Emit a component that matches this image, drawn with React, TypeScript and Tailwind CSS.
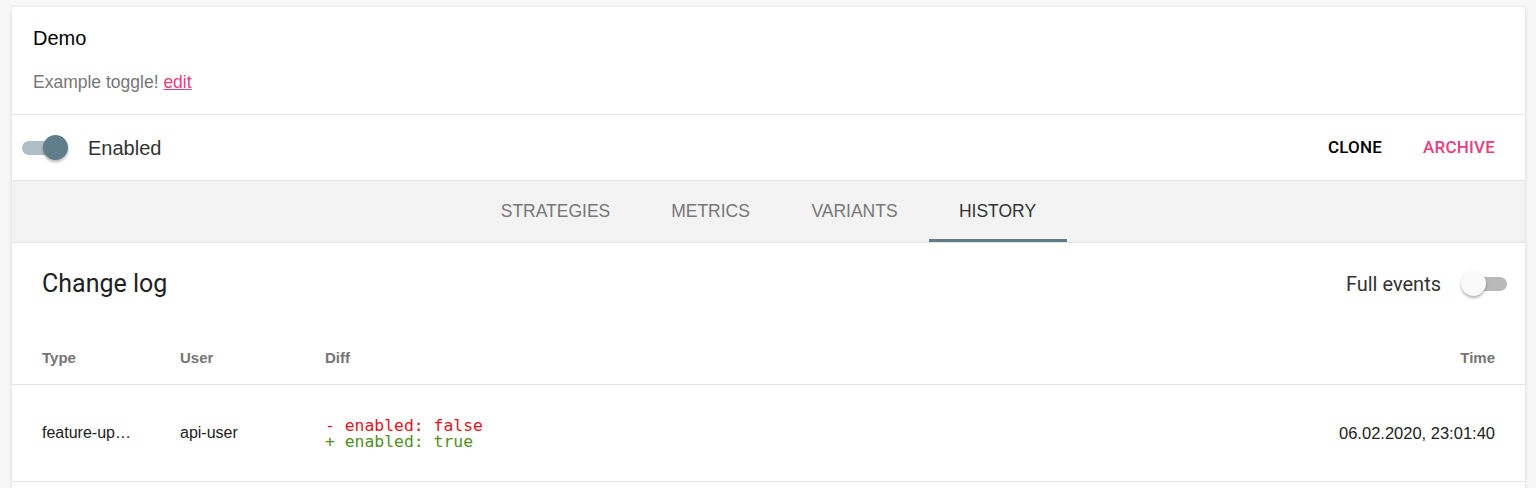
import React, { useState } from 'react';

type ToggleProps = {
    on: boolean;
    onChange: () => void;
};

function Toggle({ on, onChange }: ToggleProps) {
    return (
        <button type="button" onClick={onChange} className="relative w-[46px] h-[26px] shrink-0 cursor-pointer">
            <span
                className={
                    on
                        ? 'absolute left-0 top-[6px] w-[40px] h-[14px] rounded-full bg-[#afbdc5]'
                        : 'absolute right-0 top-[6px] w-[40px] h-[14px] rounded-full bg-[#b9b9b9]'
                }
            />
            <span
                className={
                    on
                        ? 'absolute right-0 top-0 w-[25px] h-[25px] rounded-full bg-[#607d8b] shadow-[0_2px_3px_rgba(0,0,0,0.3)]'
                        : 'absolute left-0 top-0 w-[25px] h-[25px] rounded-full bg-[#fafafa] shadow-[0_2px_3px_rgba(0,0,0,0.3)]'
                }
            />
        </button>
    );
}

const tabs = [
    { label: 'STRATEGIES', w: 'w-[170px]' },
    { label: 'METRICS', w: 'w-[140px]' },
    { label: 'VARIANTS', w: 'w-[148px]' },
    { label: 'HISTORY', w: 'w-[138px]' },
];

function App() {
    const [enabled, setEnabled] = useState(true);
    const [fullEvents, setFullEvents] = useState(false);
    const [active, setActive] = useState('HISTORY');

    return (
        <div className="min-h-screen bg-[#f7f7f7] pt-[7px] pl-[12px] pr-[11px] font-['Liberation_Sans',Arial,sans-serif]">
            <div className="bg-white rounded-[3px] shadow-[0_1px_4px_rgba(0,0,0,0.14)]">

                {/* header */}
                <div className="h-[108px] px-[21px] pt-[19px] border-b border-[#e6e6e6]">
                    <p className="text-[20px] leading-[24px] text-black">Demo</p>
                    <p className="mt-[22px] text-[17.5px] leading-[20px] text-[#777]">
                        Example toggle!{' '}
                        <a href="#" className="text-[#e5407f] underline">edit</a>
                    </p>
                </div>

                {/* toggle + actions */}
                <div className="h-[66px] flex items-center justify-between pl-[10px] pr-[30px] border-b border-[#e6e6e6]">
                    <div className="flex items-center gap-[20px]">
                        <Toggle on={enabled} onChange={() => setEnabled(!enabled)} />
                        <span className="text-[20px] text-[#333]">Enabled</span>
                    </div>
                    <div className="flex items-center gap-[41px] font-['Roboto',sans-serif] font-medium text-[17px] tracking-[0.2px]">
                        <button type="button" className="text-black">CLONE</button>
                        <button type="button" className="text-[#e5407f]">ARCHIVE</button>
                    </div>
                </div>

                {/* tabs */}
                <div className="h-[62px] flex justify-center bg-[#f3f3f3] border-b border-[#e2e2e2]">
                    {tabs.map(tab => (
                        <button
                            key={tab.label}
                            type="button"
                            onClick={() => setActive(tab.label)}
                            className={
                                active === tab.label
                                    ? `${tab.w} h-full text-[17.5px] text-[#333] border-b-[3px] border-[#607d8b] pt-[3px]`
                                    : `${tab.w} h-full text-[17.5px] text-[#777] border-b-[3px] border-transparent pt-[3px]`
                            }
                        >
                            {tab.label}
                        </button>
                    ))}
                </div>

                {/* change log */}
                <div className="h-[82px] flex items-center justify-between pl-[30px] pr-[18px] font-['Roboto',sans-serif]">
                    <h2 className="text-[25px] text-[#222]">Change log</h2>
                    <div className="flex items-center gap-[20px]">
                        <span className="text-[20px] text-[#333]">Full events</span>
                        <Toggle on={fullEvents} onChange={() => setFullEvents(!fullEvents)} />
                    </div>
                </div>

                <div className="h-[60px] flex items-center pt-[8px] px-[30px] text-[15px] font-bold text-[#757575] border-b border-[#e2e2e2]">
                    <div className="w-[138px]">Type</div>
                    <div className="w-[145px]">User</div>
                    <div className="flex-1">Diff</div>
                    <div>Time</div>
                </div>

                <div className="h-[97px] flex items-center px-[30px] text-[16px] text-[#222] border-b border-[#e2e2e2]">
                    <div className="w-[138px]">
                        <div className="max-w-[93px] truncate">feature-updated</div>
                    </div>
                    <div className="w-[145px]">api-user</div>
                    <div className="flex-1 pt-[2px] font-['DejaVu_Sans_Mono',monospace] text-[16.4px] leading-[16px]">
                        <div className="text-[#e0141e]">- enabled: false</div>
                        <div className="text-[#4f8f23]">+ enabled: true</div>
                    </div>
                    <div className="text-[16.5px]">06.02.2020, 23:01:40</div>
                </div>

                <div className="h-[40px]" />
            </div>
        </div>
    );
}

export default App;
